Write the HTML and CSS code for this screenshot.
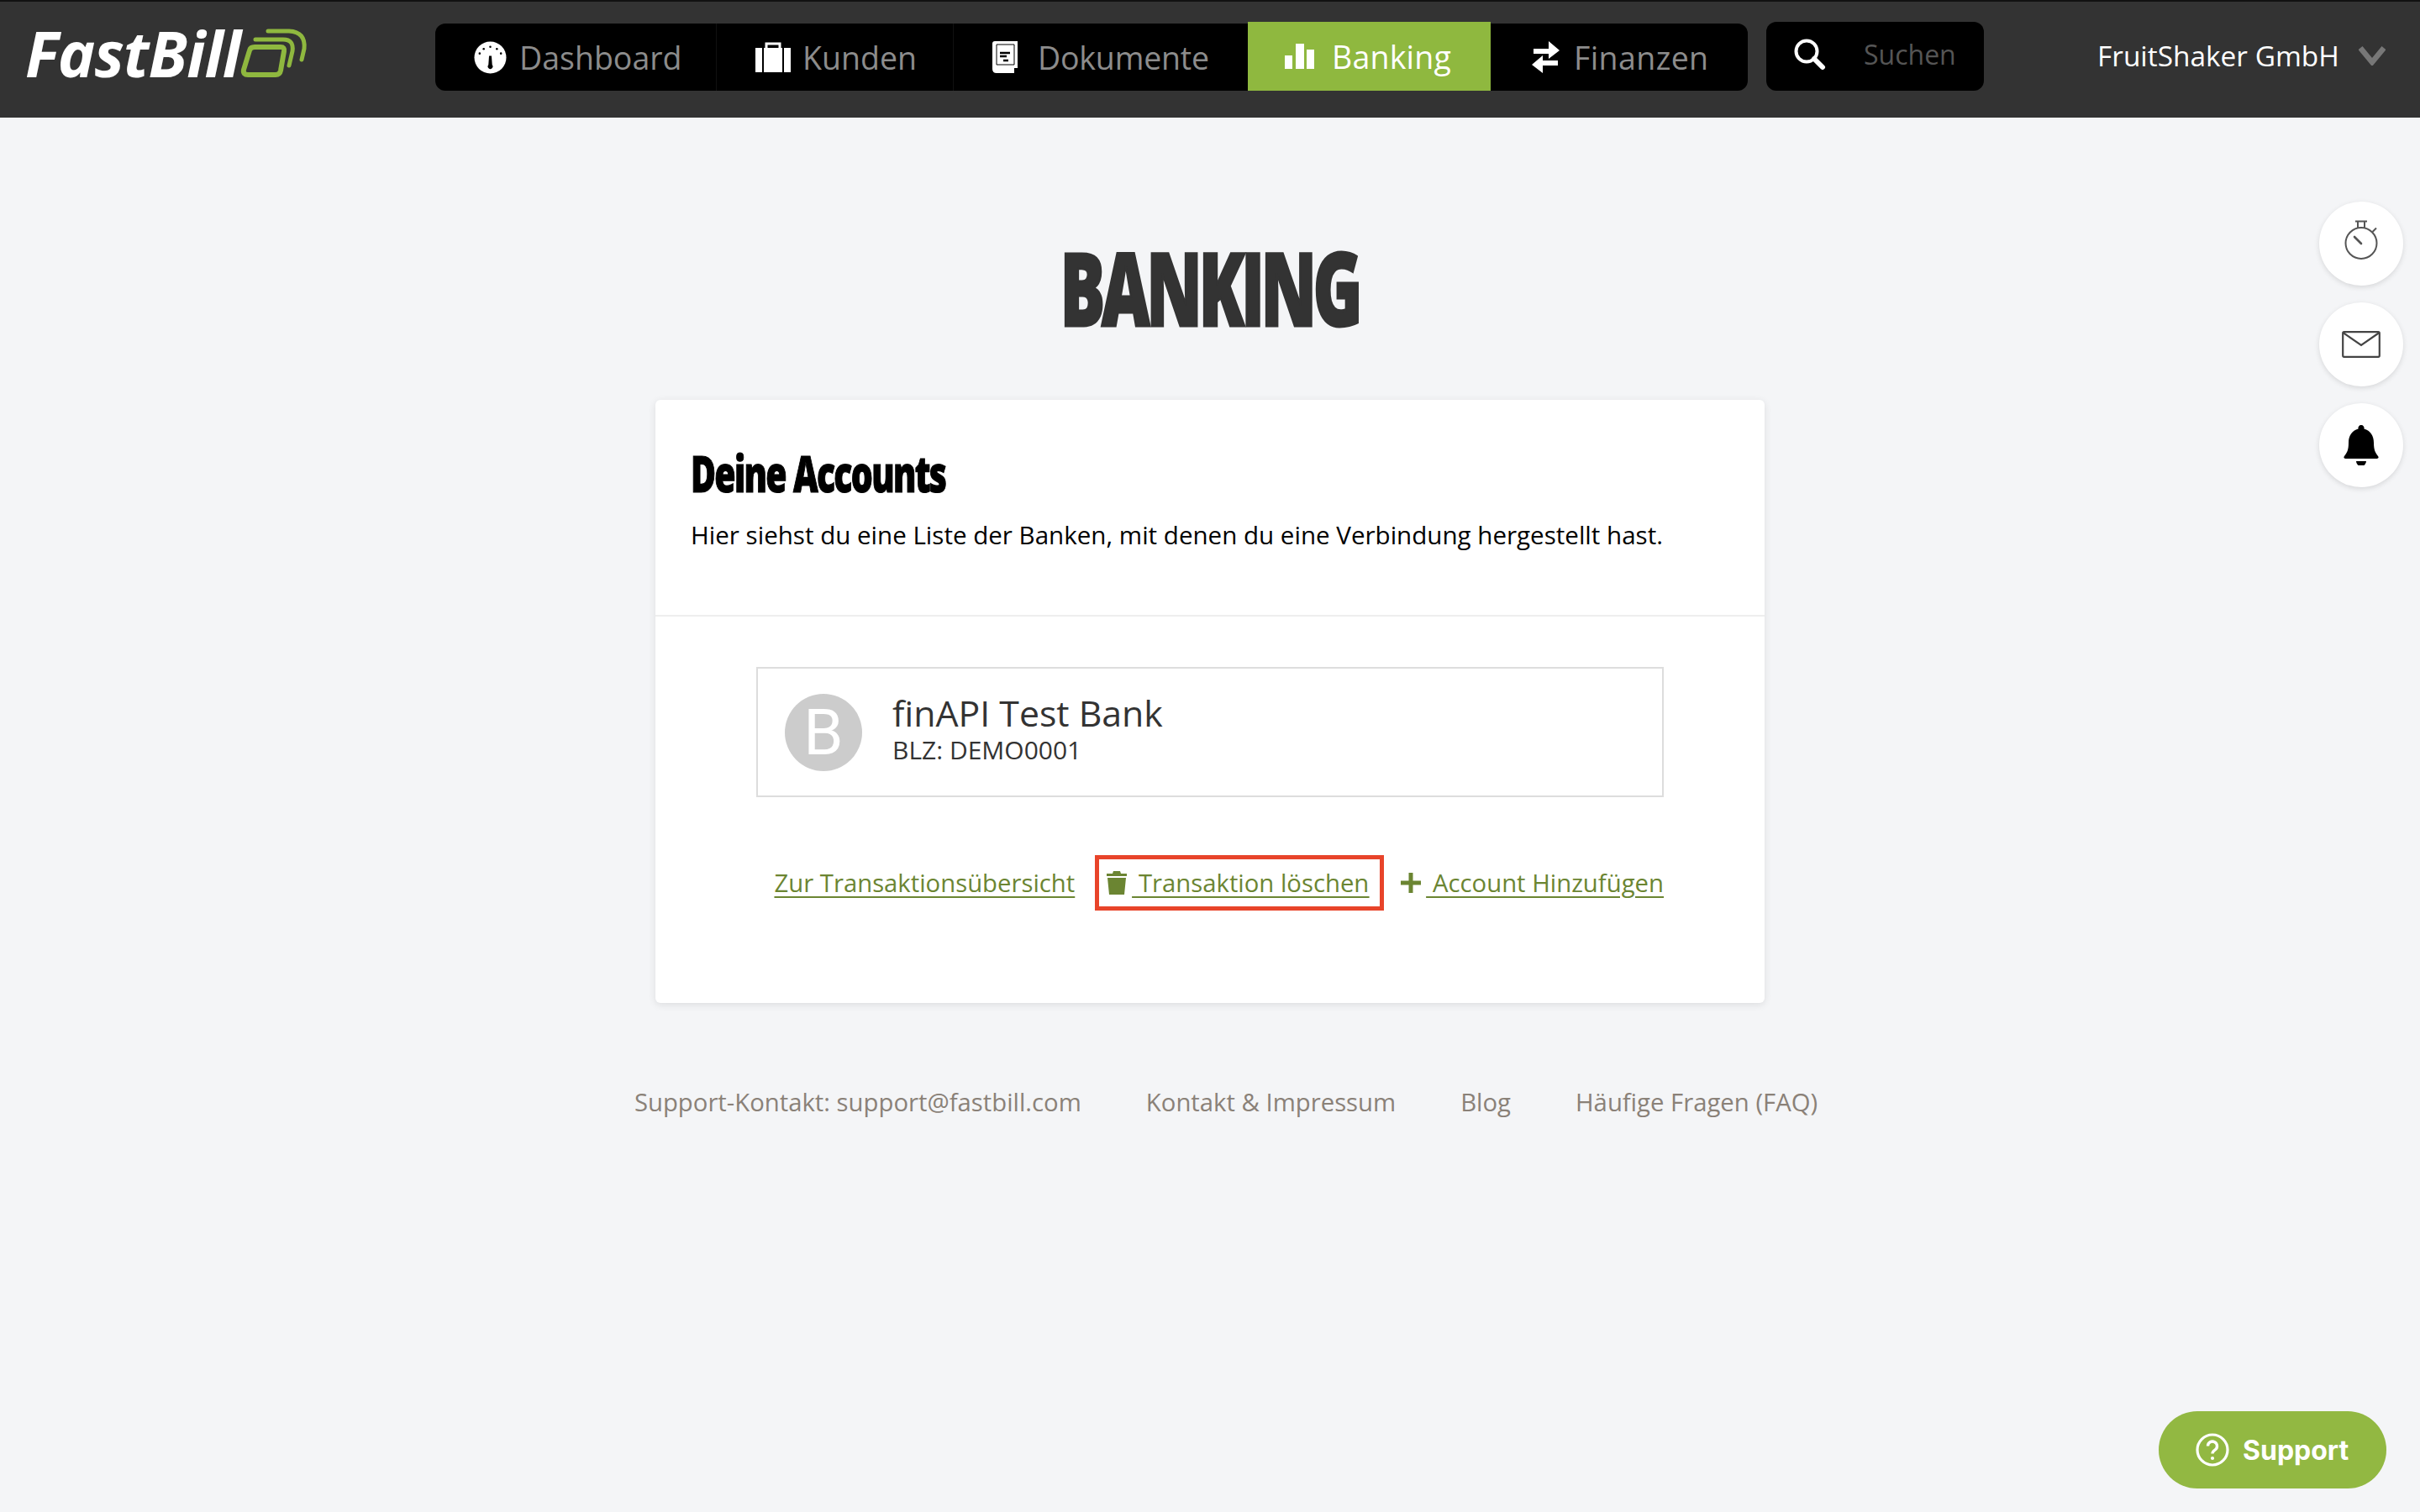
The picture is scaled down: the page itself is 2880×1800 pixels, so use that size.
FILE: index.html
```html
<!DOCTYPE html>
<html lang="de">
<head>
<meta charset="utf-8">
<title>FastBill Banking</title>
<link rel="stylesheet" href="styles.css">
</head>
<body>
<header class="topbar">
  <a class="logo">
    <span class="logo-text">FastBill</span>
    <svg class="logo-mark" viewBox="0 0 80 60" fill="none" stroke="#8fb83f" stroke-linecap="round" stroke-linejoin="round">
      <path d="M11 27 Q12 23 17 23 H48 Q53 23 52 28 L48 51 Q47 56 42 56 H9 Q3 56 4 50 Z" stroke-width="6"/>
      <path d="M18 14 H51 Q64 14 62 28 L58 45" stroke-width="5"/>
      <path d="M33 4 H58 Q78 5 76 25 L73 38" stroke-width="5"/>
    </svg>
  </a>
  <nav class="mainnav">
    <a class="navitem nav-dash">
      <svg class="ico" viewBox="0 0 40 40"><circle cx="20" cy="20" r="19.5" fill="#fff"/><path d="M18.5 18h3l.8 11a3 3 0 1 1-4.6 0z" fill="#000"/><g fill="#000"><circle cx="20" cy="7" r="1.3"/><circle cx="12" cy="9.5" r="1.3"/><circle cx="28" cy="9.5" r="1.3"/><circle cx="7" cy="15" r="1.3"/><circle cx="33" cy="15" r="1.3"/></g></svg>
      <span>Dashboard</span>
    </a>
    <a class="navitem nav-kunden">
      <svg class="ico" viewBox="0 0 42 36"><path d="M0 7h8v29H0zM34 7h8v29h-8zM10 7h22v29H10z" fill="#fff"/><path d="M13 8V2h16v6" fill="none" stroke="#fff" stroke-width="3"/></svg>
      <span>Kunden</span>
    </a>
    <a class="navitem nav-doku">
      <svg class="ico" viewBox="0 0 32 38"><path d="M1 3 Q1 0 4 0H31V32H27V38H6Q1 38 1 33Z" fill="#fff"/><path d="M6 4H27V28H6z" fill="none" stroke="#000" stroke-width="1"/><path d="M10 14h12M10 18h8M14 23h6" stroke="#000" stroke-width="2.5"/></svg>
      <span>Dokumente</span>
    </a>
    <a class="navitem nav-bank is-active">
      <svg class="ico" viewBox="0 0 35 30"><path d="M0 14h9v16H0zM13 0h10v30H13zM26 7h9v23h-9z" fill="#fff"/></svg>
      <span>Banking</span>
    </a>
    <a class="navitem nav-fin">
      <svg class="ico" viewBox="0 0 33 38"><path d="M2 9H20V0L33 11 20 21V15H2zM31 23H13V17L0 28 13 38V29H31z" fill="#fff"/></svg>
      <span>Finanzen</span>
    </a>
  </nav>
  <div class="search">
    <svg class="search-ico" viewBox="0 0 38 38" fill="none" stroke="#fff" stroke-linecap="round"><circle cx="15" cy="15" r="12.5" stroke-width="4"/><path d="M24 24L34 34" stroke-width="6"/></svg>
    <span class="search-ph">Suchen</span>
  </div>
  <div class="account">
    <span>FruitShaker GmbH</span>
    <svg class="chev" viewBox="0 0 32 24" fill="none" stroke="#777" stroke-width="6.5"><path d="M2 3L16 20L30 3"/></svg>
  </div>
</header>

<div class="sidebtns">
  <a class="roundbtn">
    <svg viewBox="0 0 42 48" class="r-timer" fill="none" stroke="#555" stroke-width="2"><circle cx="21" cy="27.5" r="18.500"/><path d="M14 1.500H28M17 2V9M25 2V9M34.500 14L39 9.500"/><path d="M13 20L21 28" stroke-width="2.600" stroke-linecap="round"/></svg>
  </a>
  <a class="roundbtn">
    <svg viewBox="0 0 46 32" class="r-mail" fill="none" stroke="#444" stroke-width="2.2"><rect x="1.2" y="1.2" width="43.6" height="29.6" rx="1.5"/><path d="M1.5 2L23 17L44.5 2"/></svg>
  </a>
  <a class="roundbtn">
    <svg viewBox="0 0 42 48" class="r-bell"><path d="M21 0a3.5 3.5 0 0 1 3.4 4.5C32 6.5 36 13 36 21c0 9 2 12 5 16 1.2 1.6.6 3-1.5 3h-37c-2.100 0-2.700-1.400-1.500-3 3-4 5-7 5-16 0-8 4-14.500 11.600-16.500A3.500 3.500 0 0 1 21 0zM15 43h12a6 6 0 0 1-12 0z" fill="#000"/></svg>
  </a>
</div>

<main class="page">
  <h1 class="title"><span>BANKING</span></h1>
  <section class="card">
    <div class="card-head">
      <h2 class="card-title"><span>Deine Accounts</span></h2>
      <p class="card-sub">Hier siehst du eine Liste der Banken, mit denen du eine Verbindung hergestellt hast.</p>
    </div>
    <div class="card-body">
      <div class="bank">
        <div class="avatar">B</div>
        <div class="bank-info">
          <div class="bank-name">finAPI Test Bank</div>
          <div class="bank-blz">BLZ: DEMO0001</div>
        </div>
      </div>
      <div class="actions">
        <a class="act">Zur Transaktionsübersicht</a>
        <div class="highlight">
          <a class="act act-ico">
            <svg class="i-trash" viewBox="0 0 26 28"><path d="M9 0h8l1 3h7v3H1V3h7zM2 8h22l-2 20H4z" fill="#6b8532"/></svg>
            <span class="u-gap"> </span><span class="u-text">Transaktion löschen</span>
          </a>
        </div>
        <a class="act act-ico">
          <svg class="i-plus" viewBox="0 0 24 24"><path d="M9.500 0h5v9.500H24v5h-9.500V24h-5v-9.500H0v-5h9.500z" fill="#6b8532"/></svg>
          <span class="u-gap"> </span><span class="u-text">Account Hinzufügen</span>
        </a>
      </div>
    </div>
  </section>
  <footer class="foot">
    <a>Support-Kontakt: support@fastbill.com</a>
    <a>Kontakt &amp; Impressum</a>
    <a>Blog</a>
    <a>Häufige Fragen (FAQ)</a>
  </footer>
</main>

<a class="support">
  <svg viewBox="0 0 40 40" class="s-ico" fill="none" stroke="#fff"><circle cx="20" cy="20" r="18" stroke-width="3.200"/><path d="M14.500 15.500a5.500 5.500 0 1 1 8.500 4.600c-2 1.300-3 2.400-3 4.400" stroke-width="3.400"/><circle cx="20" cy="30" r="2.100" fill="#fff" stroke="none"/></svg>
  <span>Support</span>
</a>
</body>
</html>
```
FILE: styles.css
```css
* { box-sizing: border-box; }
html, body { margin: 0; padding: 0; }
body {
  min-height: 1800px;
  background: #f4f5f7;
  font-family: "Open Sans", "Noto Sans", sans-serif;
  color: #000;
  overflow: hidden;
}
a { color: inherit; text-decoration: none; }

.topbar {
  height: 140px;
  background: #333;
  border-top: 2px solid #111;
  display: flex;
  align-items: flex-start;
  padding-left: 30px;
}
.logo { display: flex; align-items: flex-end; width: 488px; margin-top: 31px; height: 60px; }
.logo-text {
  font-family: "Open Sans", sans-serif;
  font-style: italic;
  font-weight: 700;
  font-size: 75px;
  line-height: 60px;
  color: #fff;
  letter-spacing: -1px;
}
.logo-mark { width: 80px; height: 60px; flex: none; }

.mainnav {
  display: flex;
  margin-top: 24px;
  height: 82px;
  width: 1562px;
  padding-top: 2px;
}
.navitem {
  display: flex;
  align-items: center;
  height: 80px;
  background: #000;
  color: #8c8c8c;
  font-size: 37.5px;
  border-right: 1px solid #111;
}
.nav-dash { width: 335px; padding-left: 46px; border-radius: 12px 0 0 12px; }
.nav-kunden { width: 282px; padding-left: 46px; }
.nav-doku { width: 350px; padding-left: 45px; border-right: 0; }
.nav-bank { width: 289px; padding-left: 44px; }
.nav-fin { width: 306px; padding-left: 49px; border-radius: 0 12px 12px 0; border-right: 0; }
.is-active {
  background: #8fb83f;
  color: #fff;
  height: 82px;
  margin-top: -2px;
  border-right: 0;
}
.ico { flex: none; margin-right: 17px; }
.nav-dash .ico { width: 39px; height: 39px; margin-right: 15px; }
.nav-kunden .ico { width: 42px; height: 36px; margin-right: 14px; }
.nav-doku .ico { width: 32px; height: 38px; margin-right: 23px; }
.nav-bank .ico { width: 35px; height: 30px; margin-right: 21px; }
.nav-fin .ico { width: 33px; height: 38px; margin-right: 17px; }
.nav-doku span { letter-spacing: -.2px; }
.nav-fin span { letter-spacing: .4px; }
.nav-bank span { letter-spacing: .2px; }

.search {
  width: 259px;
  height: 82px;
  margin: 24px 0 0 22px;
  background: #000;
  border-radius: 12px;
  display: flex;
  align-items: flex-start;
  padding: 20px 0 0 33px;
}
.search-ico { width: 38px; height: 38px; flex: none; }
.search-ph { margin: -3px 0 0 45px; font-size: 32px; line-height: 44px; color: #555; }

.account {
  display: flex;
  align-items: center;
  margin: 44px 0 0 135px;
  height: 40px;
  color: #fff;
  font-size: 33.4px;
}
.chev { width: 32px; height: 24px; margin-left: 23px; }

.sidebtns {
  position: absolute;
  left: 2760px;
  top: 240px;
  display: flex;
  flex-direction: column;
  gap: 20px;
}
.roundbtn {
  width: 100px;
  height: 100px;
  border-radius: 50%;
  background: #fff;
  box-shadow: 0 2px 6px rgba(0,0,0,.12);
  display: flex;
  align-items: center;
  justify-content: center;
}
.r-timer { width: 42px; height: 48px; margin-bottom: 8px; }
.r-mail { width: 46px; height: 32px; }
.r-bell { width: 42px; height: 48px; }

.page { display: flex; flex-direction: column; align-items: center; }
.title {
  margin: 158px 0 0;
  height: 88px;
  color: #333;
  font-size: 120px;
  line-height: 88px;
  font-weight: 800;
}
.title span {
  display: inline-block;
  transform: scaleX(.66);
  letter-spacing: -6px;
  -webkit-text-stroke: 3px #333;
}
.card {
  width: 1320px;
  height: 718px;
  margin-top: 90px;
  background: #fff;
  border-radius: 6px;
  box-shadow: 0 2px 10px rgba(0,0,0,.1);
}
.card-head {
  height: 258px;
  padding: 62px 42px 0;
  border-bottom: 2px solid #eee;
}
.card-title {
  margin: 0;
  font-size: 60px;
  line-height: 50px;
  font-weight: 800;
  color: #000;
}
.card-title span {
  display: inline-block;
  transform: scaleX(.683);
  transform-origin: left center;
  letter-spacing: -2.5px;
  white-space: nowrap;
  -webkit-text-stroke: 1.2px #000;
}
.card-sub { margin: 27px 0 0; font-size: 29.55px; line-height: 44px; color: #000; }
.card-body { padding: 60px 120px 0; }
.bank {
  height: 155px;
  border: 2px solid #ddd;
  display: flex;
  align-items: center;
  padding-left: 32px;
}
.avatar {
  width: 92px;
  height: 92px;
  border-radius: 50%;
  background: #ccc;
  color: #fff;
  font-family: Roboto, sans-serif;
  font-weight: 400;
  font-size: 76px;
  line-height: 92px;
  text-align: center;
}
.bank-info { margin-left: 36px; padding-bottom: 12px; color: #333; }
.bank-name { font-size: 42.8px; line-height: 54px; }
.bank-blz { font-size: 30px; line-height: 34px; }
.actions {
  display: flex;
  justify-content: flex-end;
  align-items: center;
  margin-top: 69px;
  height: 66px;
  color: #6b8532;
  font-size: 29.3px;
}
.act { text-decoration: underline; text-underline-offset: 5px; white-space: pre; display: flex; align-items: center; }
.highlight {
  height: 66px;
  border: 5px solid #e8442a;
  margin: 0 20px 0 24px;
  padding: 0 13px 0 8px;
  display: flex;
  align-items: center;
}
.i-trash { width: 26px; height: 28px; flex: none; margin-right: 5px; }
.i-plus { width: 24px; height: 24px; flex: none; margin-right: 6px; }
.u-gap { text-decoration: underline; }
.u-text { text-decoration: underline; }
.foot {
  display: flex;
  gap: 77px;
  margin: 98px 0 0 38px;
  font-size: 29.3px;
  line-height: 40px;
  color: #8a8178;
}
.support {
  position: absolute;
  left: 2569px;
  top: 1680px;
  width: 271px;
  height: 92px;
  border-radius: 46px;
  background: #92b842;
  color: #fff;
  display: flex;
  align-items: center;
  padding-left: 44px;
  font-family: Inter, sans-serif;
  font-weight: 700;
  font-size: 32px;
}
.s-ico { width: 40px; height: 40px; margin-right: 16px; }
```
